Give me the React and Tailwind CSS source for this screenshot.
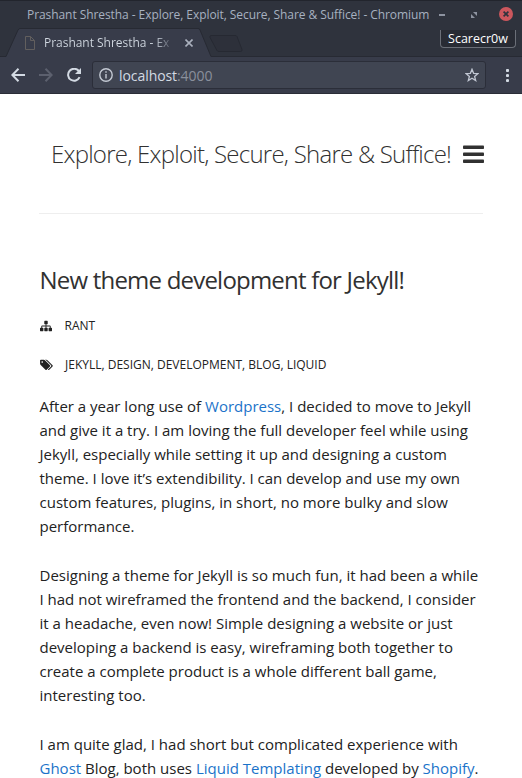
import React from "react";

function TitleBar() {
  return (
    <div className="flex h-[28px] items-center bg-[#2f333d] border-t border-[#22252d] pl-[27px] pr-[9px] text-[#a7b1c0]">
      <span className="w-[403px] shrink-0 whitespace-nowrap text-[12px] leading-[26px] tracking-[-0.07px] font-medium">
        Prashant Shrestha - Explore, Exploit, Secure, Share &amp; Suffice! - Chromium
      </span>
      <span className="ml-[9px] h-[2px] w-[6px] bg-[#8d93a0]" />
      <svg className="ml-[26px]" width="6" height="6" viewBox="0 0 6 6" fill="#8d93a0">
        <path d="M2 0h4v4zM0 2v4h4z" />
      </svg>
      <svg className="ml-auto -mt-[1px]" width="14" height="14" viewBox="0 0 14 14">
        <circle cx="7" cy="7" r="7" fill="#cc575d" />
        <path d="M4.6 4.6l4.8 4.8M9.4 4.6l-4.8 4.8" stroke="#2f333d" strokeWidth="1.7" />
      </svg>
    </div>
  );
}

function TabStrip() {
  return (
    <div className="relative flex h-[29px] items-start bg-[#2f333d]">
      <svg className="absolute left-0 top-0" width="522" height="29" viewBox="0 0 522 29">
        <path d="M0 28.500H6L18 2q1-1.500 2-1.500H198q1.500 0 2 1.500L211 28.500H522V30H0z" fill="#383c4a" stroke="#272a33" />
        <path d="M211 7.500H235q1.500 0 2 1l5 13q.5 2-1.500 2H219q-1.500 0-2-1l-7-13q-.5-2 1-2z" fill="#2d303a" stroke="#262932" />
      </svg>
      <div className="relative flex h-[29px] items-center pl-[25px]">
        <svg width="10" height="14" viewBox="0 0 10 14" fill="none" stroke="#625f5e">
          <path d="M.5.5h5l4 4v9h-9zM5.500.5v4h4" />
        </svg>
        <span className="ml-[9px] w-[134px] overflow-hidden whitespace-nowrap bg-gradient-to-r from-[#d3dae3] from-[82%] to-[#383c4a] to-[98%] bg-clip-text text-[12px] leading-[20px] tracking-[-0.03px] text-transparent">
          Prashant Shrestha - Ex
        </span>
        <svg className="ml-[7px]" width="8" height="8" viewBox="0 0 8 8" stroke="#aab0bd" strokeWidth="1.6">
          <path d="M.5.5l7 7M7.500.5l-7 7" />
        </svg>
      </div>
      <div className="relative ml-auto mr-[6px] mt-[2px] h-[18px] w-[76px] rounded-b-[4px] border border-t-0 border-[#6b6f78] bg-[#282b34] text-center text-[12.500px] leading-[18px] text-white">
        Scarecr0w
      </div>
    </div>
  );
}

function Toolbar() {
  return (
    <div className="flex h-[37px] items-center border-b border-[#2a2d37] bg-[#383c4a] pl-[11px] pr-[13px]">
      <svg width="14" height="14" viewBox="0 0 14 14" fill="none" stroke="#d3dae3" strokeWidth="2">
        <path d="M14 7H1.500M7.500.8L1.300 7l6.200 6.200" />
      </svg>
      <svg className="ml-[14px]" width="14" height="14" viewBox="0 0 14 14" fill="none" stroke="#5c606e" strokeWidth="2">
        <path d="M0 7h12.500M6.500.8L12.700 7l-6.200 6.200" />
      </svg>
      <svg className="ml-[14px]" width="15" height="14" viewBox="0 0 15 14" fill="none">
        <path d="M12.600 9.200A6 6 0 1 1 11.800 3" stroke="#d3dae3" strokeWidth="2" />
        <path d="M14 0v6H8z" fill="#d3dae3" />
      </svg>
      <div className="ml-[10px] flex h-[28px] w-[394px] items-center rounded-[3px] border border-[#2b2e39] bg-[#404552] pl-[6px] pr-[6px]">
        <svg width="14" height="14" viewBox="0 0 14 14" fill="none" stroke="#c3c9d3" strokeWidth="1.400">
          <circle cx="7" cy="7" r="6.200" />
          <path d="M7 6v4.500M7 3.300v1.500" />
        </svg>
        <span className="ml-[6px] text-[14px] tracking-[-0.070px] text-[#d3dae3]">
          localhost<span className="text-[#8a909c]">:4000</span>
        </span>
        <svg className="ml-auto" width="14" height="14" viewBox="0 0 14 14" fill="none" stroke="#c0c6d2" strokeWidth="1.300">
          <path d="M7 1.300l1.600 4 4.300.3-3.300 2.800 1.100 4.200L7 10.300l-3.700 2.300 1.100-4.200L1.100 5.600l4.300-.3z" />
        </svg>
      </div>
      <svg className="ml-auto" width="3" height="13" viewBox="0 0 3 13" fill="#d3dae3">
        <circle cx="1.500" cy="1.500" r="1.600" />
        <circle cx="1.500" cy="6.500" r="1.600" />
        <circle cx="1.500" cy="11.500" r="1.600" />
      </svg>
    </div>
  );
}

function SiteHeader() {
  return (
    <header className="flex h-[120px] items-center justify-end border-b border-[#eeeeee]">
      <h1 className="w-[403px] whitespace-nowrap text-[24px] font-light leading-[36px] tracking-[-0.760px] text-[#313131]">
        Explore, Exploit, Secure, Share &amp; Suffice!
      </h1>
      <svg className="ml-[9px] -mr-px" width="21" height="18" viewBox="0 0 21 18" fill="#313131">
        <rect width="21" height="3.500" y="0.500" rx="0.800" />
        <rect width="21" height="3.500" y="7.500" rx="0.800" />
        <rect width="21" height="3.500" y="14.500" rx="0.800" />
      </svg>
    </header>
  );
}

function SitemapIcon() {
  return (
    <svg width="12" height="12" viewBox="0 0 1792 1792" fill="currentColor">
      <path d="M1792 1248v320q0 40-28 68t-68 28h-320q-40 0-68-28t-28-68v-320q0-40 28-68t68-28h96v-192h-512v192h96q40 0 68 28t28 68v320q0 40-28 68t-68 28h-320q-40 0-68-28t-28-68v-320q0-40 28-68t68-28h96v-192h-512v192h96q40 0 68 28t28 68v320q0 40-28 68t-68 28h-320q-40 0-68-28t-28-68v-320q0-40 28-68t68-28h96v-192q0-52 38-90t90-38h512v-192h-96q-40 0-68-28t-28-68v-320q0-40 28-68t68-28h320q40 0 68 28t28 68v320q0 40-28 68t-68 28h-96v192h512q52 0 90 38t38 90v192h96q40 0 68 28t28 68z" />
    </svg>
  );
}

function TagsIcon() {
  return (
    <svg width="13" height="12" viewBox="0 0 1920 1792" fill="currentColor">
      <path d="M448 448q0-53-37.500-90.500t-90.500-37.500-90.500 37.500-37.500 90.500 37.500 90.500 90.500 37.500 90.500-37.500 37.500-90.500zm1067 576q0 53-37 90l-491 492q-39 37-91 37-53 0-90-37l-715-716q-38-37-64.500-101t-26.500-117v-416q0-52 38-90t90-38h416q53 0 117 26.500t102 64.500l715 714q37 39 37 91zm384 0q0 53-37 90l-491 492q-39 37-91 37-36 0-59-14t-53-45l470-470q37-37 37-90 0-52-37-91l-715-714q-38-38-102-64.500t-117-26.500h224q53 0 117 26.500t102 64.500l715 714q37 39 37 91z" />
    </svg>
  );
}

function Link({ children }) {
  return <a className="text-[#1b73c9]">{children}</a>;
}

function Post() {
  return (
    <article className="pl-[0.5px] text-[#222222]">
      <h2 className="mt-[48px] whitespace-nowrap text-[24px] leading-[36px] tracking-[-0.790px] text-[#313131]">
        New theme development for Jekyll!
      </h2>
      <div className="mt-[18px] flex h-[20px] items-center text-[12px]">
        <span className="w-[25px]"><SitemapIcon /></span>
        <span>RANT</span>
      </div>
      <div className="mt-[19px] flex h-[20px] items-center text-[12px]">
        <span className="w-[25.500px]"><TagsIcon /></span>
        <span>JEKYLL, DESIGN, DEVELOPMENT, BLOG, LIQUID</span>
      </div>
      <div className="mt-[19px] flex flex-col gap-[25px] whitespace-nowrap text-[15px] leading-[24px]">
        <p>
          After a year long use of <Link>Wordpress</Link>, I decided to move to Jekyll<br />
          and give it a try. I am loving the full developer feel while using<br />
          Jekyll, especially while setting it up and designing a custom<br />
          theme. I love it’s extendibility. I can develop and use my own<br />
          custom features, plugins, in short, no more bulky and slow<br />
          performance.
        </p>
        <p>
          Designing a theme for Jekyll is so much fun, it had been a while<br />
          I had not wireframed the frontend and the backend, I consider<br />
          it a headache, even now! Simple designing a website or just<br />
          developing a backend is easy, wireframing both together to<br />
          create a complete product is a whole different ball game,<br />
          interesting too.
        </p>
        <p>
          I am quite glad, I had short but complicated experience with<br />
          <Link>Ghost</Link> Blog, both uses <Link>Liquid Templating</Link> developed by <Link>Shopify</Link>.
        </p>
      </div>
    </article>
  );
}

export default function App() {
  return (
    <div className="h-[778px] w-[522px] overflow-hidden bg-white font-['Open_Sans','Noto_Sans',sans-serif]">
      <TitleBar />
      <TabStrip />
      <Toolbar />
      <main className="px-[39px]">
        <SiteHeader />
        <Post />
      </main>
    </div>
  );
}
